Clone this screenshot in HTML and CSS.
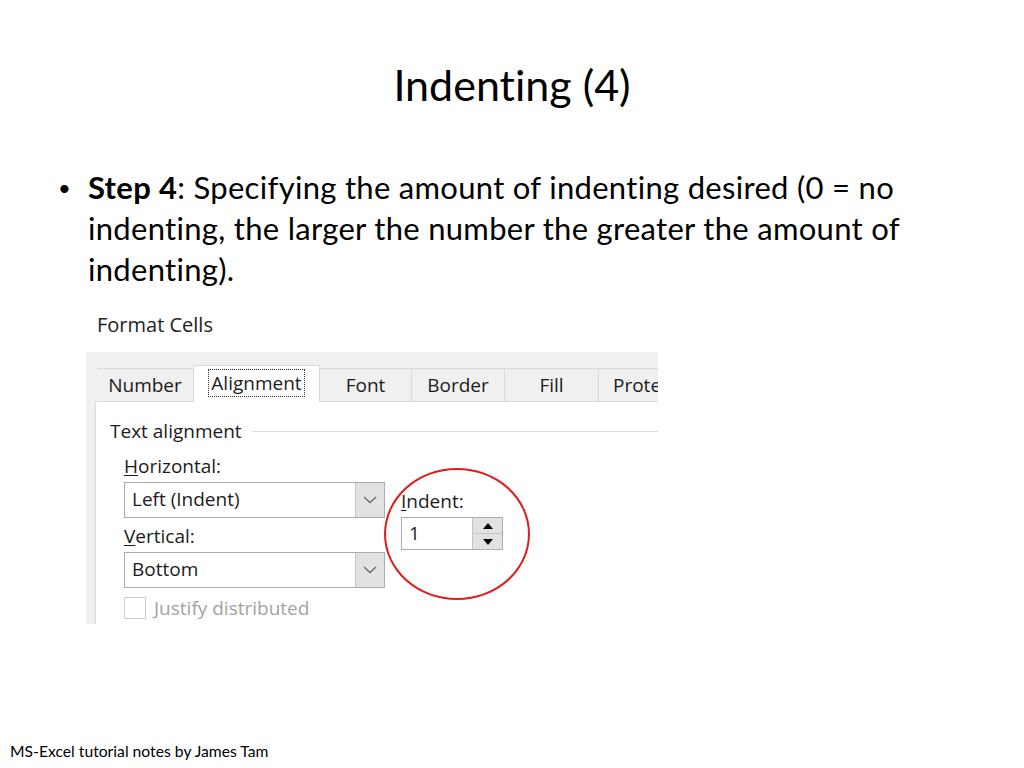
FILE: index.html
```html
<!DOCTYPE html>
<html lang="en">
<head>
    <meta charset="UTF-8">
    <title>Indenting (4)</title>
    <link rel="stylesheet" href="styles.css">
</head>
<body>
    <div class="slide">
        <h1 class="title">Indenting (4)</h1>

        <div class="point">
            <span class="bullet">&bull;</span>
            <p><b>Step 4</b>: Specifying the amount of indenting desired (0 = no indenting, the larger the number the greater the amount of indenting).</p>
        </div>

        <div class="dialog">
            <div class="caption">Format Cells</div>
            <div class="sheet">
                <div class="tabs">
                    <div class="tab tab-number">Number</div>
                    <div class="tab tab-active"><span class="focus">Alignment</span></div>
                    <div class="tab tab-font">Font</div>
                    <div class="tab tab-border">Border</div>
                    <div class="tab tab-fill">Fill</div>
                    <div class="tab tab-prot">Protection</div>
                </div>
                <div class="page">
                    <div class="group-title"><span>Text alignment</span><i class="rule"></i></div>
                    <div class="align-row">
                        <div class="align-col">
                            <div class="label"><u>H</u>orizontal:</div>
                            <div class="select">
                                <span class="value">Left (Indent)</span>
                                <span class="drop">
                                    <svg width="14" height="8" viewBox="0 0 14 8"><path d="M1 1 L7 6.5 L13 1" fill="none" stroke="#6d6d6d" stroke-width="1.4"/></svg>
                                </span>
                            </div>
                            <div class="label"><u>V</u>ertical:</div>
                            <div class="select">
                                <span class="value">Bottom</span>
                                <span class="drop">
                                    <svg width="14" height="8" viewBox="0 0 14 8"><path d="M1 1 L7 6.5 L13 1" fill="none" stroke="#6d6d6d" stroke-width="1.4"/></svg>
                                </span>
                            </div>
                            <div class="check-row">
                                <span class="checkbox"></span>
                                <span class="check-label">Justify distributed</span>
                            </div>
                        </div>
                        <div class="indent-col">
                            <div class="label"><u>I</u>ndent:</div>
                            <div class="spin">
                                <span class="value">1</span>
                                <span class="spin-btns">
                                    <span class="spin-btn"><svg width="10" height="6" viewBox="0 0 10 6"><path d="M0 6 L5 0 L10 6 Z" fill="#000"/></svg></span>
                                    <span class="spin-btn"><svg width="10" height="6" viewBox="0 0 10 6"><path d="M0 0 L5 6 L10 0 Z" fill="#000"/></svg></span>
                                </span>
                            </div>
                            <div class="highlight"></div>
                        </div>
                    </div>
                </div>
            </div>
        </div>

        <footer class="footer">MS-Excel tutorial notes by James Tam</footer>
    </div>
</body>
</html>
```

FILE: styles.css
```css
body {
    margin: 0;
    padding: 0;
    background: #ffffff;
    font-family: 'Lato', 'Liberation Sans', sans-serif;
    font-variant-ligatures: none;
    color: #000;
}

.slide {
    width: 1024px;
    height: 768px;
    display: flex;
    flex-direction: column;
    overflow: hidden;
}

.title {
    margin: 0;
    padding-top: 60px;
    font-size: 43px;
    font-weight: normal;
    line-height: 50px;
    text-align: center;
}

.point {
    display: flex;
    margin-top: 57px;
    padding-left: 58px;
}

.bullet {
    width: 30px;
    font-size: 22px;
    line-height: 41px;
}

.point p {
    margin: 0;
    width: 850px;
    font-size: 31px;
    line-height: 41px;
    letter-spacing: 0.3px;
}

/* dialog screenshot */
.dialog {
    margin-top: 20px;
    margin-left: 86px;
    width: 572px;
    font-family: 'Open Sans', 'Noto Sans', sans-serif;
    font-size: 19px;
    color: #1b1b1b;
}

.caption {
    padding-left: 11px;
    height: 42px;
    line-height: 30px;
    font-size: 20px;
    color: #222;
}

.sheet {
    background: #f0f0f0;
    height: 272px;
    overflow: hidden;
    padding-top: 13px;
    box-sizing: border-box;
}

.tabs {
    display: flex;
    align-items: flex-end;
    padding-left: 11px;
    height: 37px;
    white-space: nowrap;
}

.tab {
    height: 32px;
    line-height: 32px;
    text-align: center;
    border-top: 1px solid #dadada;
    border-right: 1px solid #dadada;
    border-bottom: 1px solid #dadada;
    background: #f0f0f0;
    flex-shrink: 0;
}

.tab-number { width: 96px; border-right: none; }
.tab-font { width: 91px; }
.tab-border { width: 92px; }
.tab-fill { width: 93px; }
.tab-prot { width: 93px; text-align: left; padding-left: 14px; border-right: none; }

.tab-active {
    width: 127px;
    height: 37px;
    line-height: 34px;
    background: #fff;
    border: 1px solid #dadada;
    border-bottom: none;
    box-sizing: border-box;
}

.focus {
    border: 1px dotted #333;
    padding: 0 2px;
}

.page {
    margin-left: 9px;
    background: #fff;
    border-left: 1px solid #d9d9d9;
    height: 240px;
    padding: 17px 0 0 14px;
    box-sizing: border-box;
}

.group-title {
    display: flex;
    align-items: center;
    gap: 10px;
    line-height: 24px;
}

.rule {
    flex: 1;
    border-top: 1px solid #dcdcdc;
}

.align-row {
    display: flex;
    padding-left: 14px;
    margin-top: 11px;
}

.align-col {
    width: 261px;
}

.label {
    line-height: 24px;
    margin-bottom: 4px;
}

.label u {
    text-underline-offset: 2px;
}

.select {
    display: flex;
    height: 36px;
    border: 1px solid #acacac;
    box-sizing: border-box;
    margin-bottom: 6px;
}

.select .value {
    flex: 1;
    padding-left: 7px;
    line-height: 33px;
}

.drop {
    width: 28px;
    background: #e2e2e2;
    border-left: 1px solid #c4c4c4;
    display: flex;
    align-items: center;
    justify-content: center;
}

.check-row {
    display: flex;
    align-items: center;
    gap: 8px;
    margin-top: 7px;
}

.checkbox {
    width: 20px;
    height: 20px;
    border: 1px solid #cccccc;
}

.check-label {
    color: #a3a3a3;
}

.indent-col {
    position: relative;
    margin-left: 16px;
    padding-top: 35px;
}

.spin {
    display: flex;
    width: 102px;
    height: 33px;
    border: 1px solid #acacac;
    box-sizing: border-box;
}

.spin .value {
    flex: 1;
    padding-left: 7px;
    line-height: 30px;
}

.spin-btns {
    width: 29px;
    display: flex;
    flex-direction: column;
    border-left: 1px solid #c4c4c4;
    background: #e2e2e2;
}

.spin-btn {
    flex: 1;
    display: flex;
    align-items: center;
    justify-content: center;
}

.spin-btn + .spin-btn {
    border-top: 1px solid #c4c4c4;
}

/* red annotation circle */
.highlight {
    position: absolute;
    left: -17px;
    top: 14px;
    width: 142px;
    height: 128px;
    border: 2px solid #e31b1b;
    border-radius: 50%;
}

.footer {
    margin-top: auto;
    padding: 0 0 8px 10px;
    font-size: 15.7px;
    line-height: 18px;
}
```
